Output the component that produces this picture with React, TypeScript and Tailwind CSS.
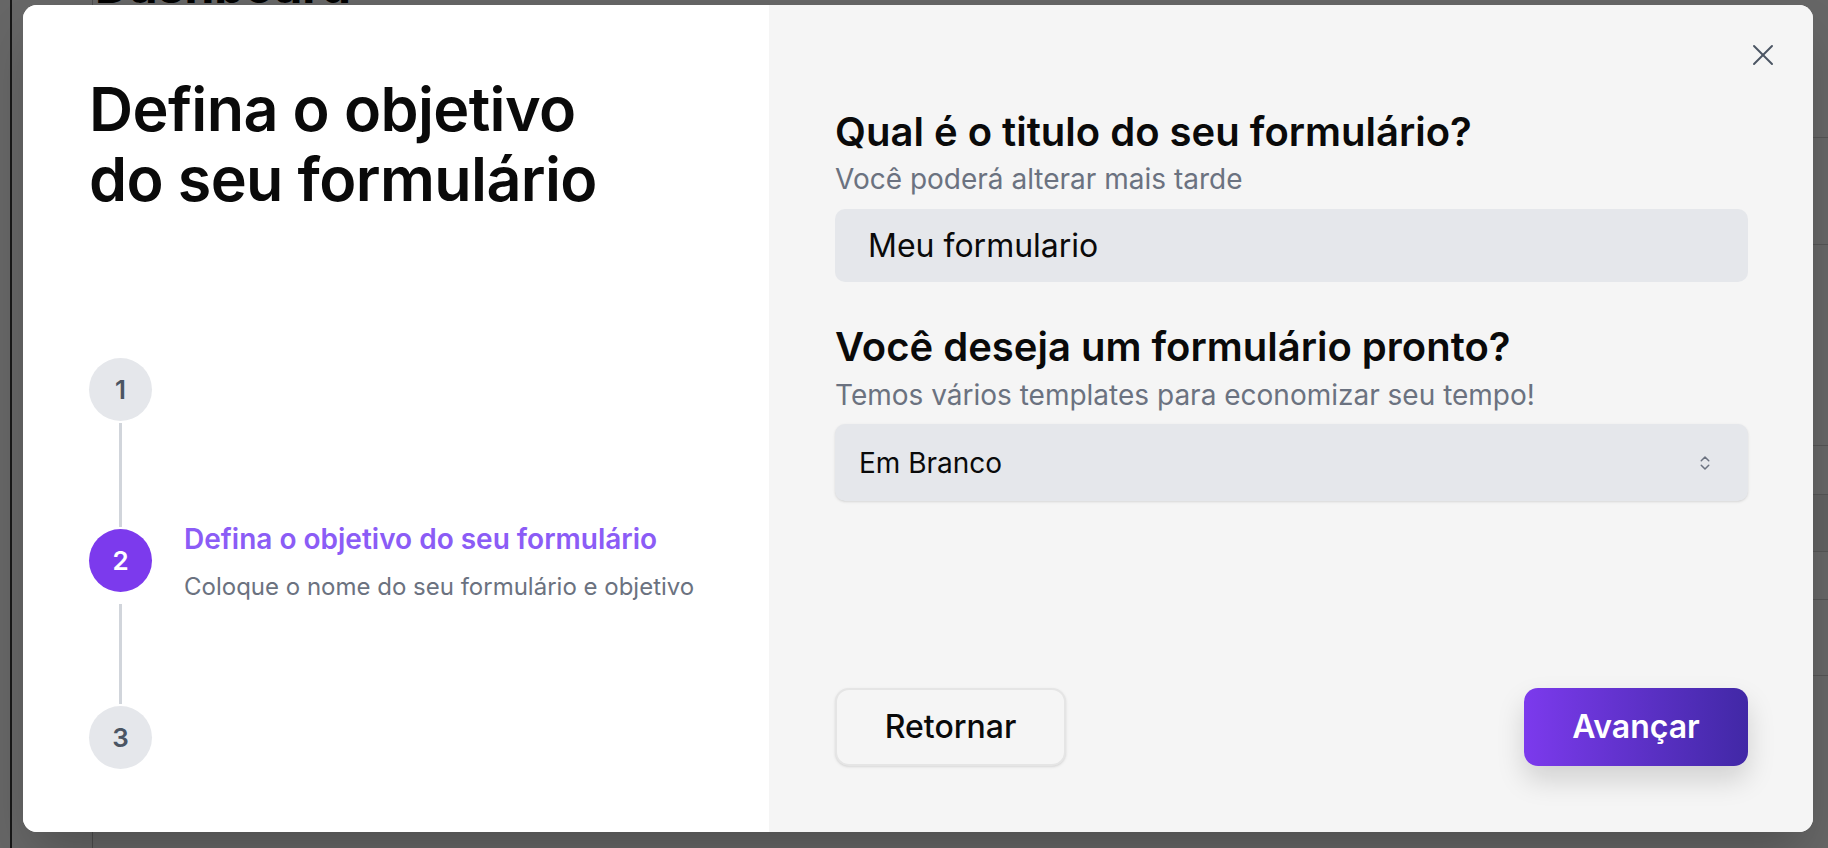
import React from "react";
import { X, ChevronsUpDown } from "lucide-react";

function StepCircle({ n, active }: { n: number; active?: boolean }) {
  return (
    <div
      className={
        active
          ? "flex h-[63px] w-[63px] shrink-0 items-center justify-center rounded-full bg-[#7c3aed] text-[26px] font-semibold text-white"
          : "flex h-[63px] w-[63px] shrink-0 items-center justify-center rounded-full bg-[#e5e7eb] text-[26px] font-semibold text-[#4b5563]"
      }
    >
      {n}
    </div>
  );
}

export default function App() {
  return (
    <div className="relative h-[848px] w-[1828px] overflow-hidden bg-white font-['Inter',sans-serif]">
      {/* underlying page */}
      <div className="flex h-full">
        <div className="w-[12px] border-r-2 border-[#3a3a3a]" />
        <div className="w-[81px] border-r border-[#bdbdbd]" />
        <div className="flex flex-1 flex-col">
          <div className="-mt-[38px] h-[48px] pl-[2px] text-[48px] font-bold leading-[48px] text-black">
            Dashboard
          </div>
          <div className="h-[128px] border-b border-[#d4d4d4]" />
          <div className="h-[107px] border-b border-[#d4d4d4]" />
          <div className="flex h-[201px] items-start justify-end border-b border-[#d4d4d4] pt-[48px]">
            <span className="translate-x-[18px] text-[34px] leading-[34px] text-[#1f2937]">n</span>
          </div>
          <div className="h-[49px] border-b border-[#d4d4d4]" />
          <div className="h-[57px] border-b border-[#d4d4d4] bg-[#f3f3f3]" />
          <div className="h-[48px] border-b border-[#d4d4d4]" />
          <div className="h-[76px] border-b border-[#d4d4d4]" />
        </div>
      </div>
      <div className="absolute inset-0 bg-black/60" />

      {/* modal */}
      <div className="absolute left-[23px] top-[5px] flex h-[827px] w-[1790px] overflow-hidden rounded-[14px] bg-white shadow-2xl">
        {/* left panel */}
        <div className="flex w-[746px] shrink-0 flex-col bg-white pl-[66px] pt-[69px]">
          <h1 className="text-[61px] font-semibold leading-[70px] tracking-[-0.01em] text-[#0a0a0a]">
            Defina o objetivo
            <br />
            do seu formulário
          </h1>

          <div className="mt-[144px] flex flex-col">
            <div className="flex items-start">
              <StepCircle n={1} />
            </div>
            <div className="flex h-[108px] w-[63px] justify-center py-[2px]">
              <div className="w-[3px] bg-[#d1d5db]" />
            </div>
            <div className="flex items-start gap-[32px]">
              <StepCircle n={2} active />
              <div className="-mt-[7px] flex flex-col">
                <span className="text-[28px] font-semibold leading-[34px] text-[#8b5cf6]">
                  Defina o objetivo do seu formulário
                </span>
                <span className="mt-[16px] text-[24px] leading-[30px] text-[#6b7280]">
                  Coloque o nome do seu formulário e objetivo
                </span>
              </div>
            </div>
            <div className="flex h-[104px] w-[63px] justify-center py-[2px]">
              <div className="w-[3px] bg-[#d1d5db]" />
            </div>
            <div className="flex items-start">
              <StepCircle n={3} />
            </div>
          </div>
        </div>

        {/* right panel */}
        <div className="relative flex flex-1 flex-col bg-[#f5f5f5] pl-[66px] pr-[65px] pt-[104px]">
          <button className="absolute right-[32px] top-[32px] text-[#4b5563]">
            <X size={36} strokeWidth={1.3} />
          </button>

          <h2 className="text-[40px] font-semibold leading-[46px] text-[#0a0a0a]">
            Qual é o titulo do seu formulário?
          </h2>
          <p className="mt-[8px] text-[28px] leading-[32px] text-[#6b7280]">
            Você poderá alterar mais tarde
          </p>
          <div className="mt-[14px] flex h-[73px] items-center rounded-[10px] bg-[#e5e7eb] px-[33px] text-[32px] text-[#0a0a0a]">
            Meu formulario
          </div>

          <h2 className="mt-[42px] text-[40px] font-semibold leading-[46px] text-[#0a0a0a]">
            Você deseja um formulário pronto?
          </h2>
          <p className="mt-[9px] text-[28px] leading-[32px] text-[#6b7280]">
            Temos vários templates para economizar seu tempo!
          </p>
          <div className="mt-[13px] flex h-[77px] items-center justify-between rounded-[10px] bg-[#e5e7eb] pl-[24px] pr-[34px] text-[28px] text-[#0a0a0a] shadow-sm">
            <span>Em Branco</span>
            <ChevronsUpDown size={18} strokeWidth={2} className="text-[#6b7280]" />
          </div>

          <div className="mt-auto mb-[66px] flex items-center justify-between">
            <button className="flex h-[78px] w-[231px] items-center justify-center rounded-[14px] border-2 border-[#e5e5e5] bg-[#f5f5f5] text-[32px] font-medium text-[#0a0a0a] shadow-sm">
              Retornar
            </button>
            <button className="flex h-[78px] w-[224px] items-center justify-center rounded-[14px] bg-gradient-to-r from-[#7c3aed] to-[#4128a6] text-[32px] font-semibold text-white shadow-[0_14px_28px_rgba(0,0,0,0.15)]">
              Avançar
            </button>
          </div>
        </div>
      </div>
    </div>
  );
}
